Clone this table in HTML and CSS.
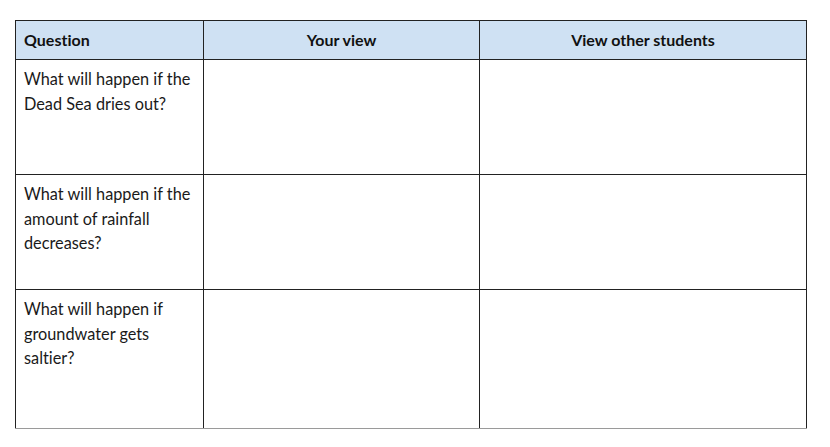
FILE: index.html
```html
<!DOCTYPE html>
<html>
<head>
<meta charset="utf-8">
<link rel="stylesheet" href="styles.css">
</head>
<body>
<table class="grid">
  <colgroup>
    <col class="c-q">
    <col class="c-you">
    <col class="c-other">
  </colgroup>
  <thead>
    <tr class="head">
      <th class="left">Question</th>
      <th>Your view</th>
      <th>View other students</th>
    </tr>
  </thead>
  <tbody>
    <tr class="row">
      <td>What will happen if the Dead Sea dries out?</td>
      <td></td>
      <td></td>
    </tr>
    <tr class="row">
      <td>What will happen if the amount of rainfall decreases?</td>
      <td></td>
      <td></td>
    </tr>
    <tr class="row last">
      <td>What will happen if groundwater gets saltier?</td>
      <td></td>
      <td></td>
    </tr>
  </tbody>
</table>
</body>
</html>
```
FILE: styles.css
```css
html, body {
  margin: 0;
  padding: 0;
  background: #ffffff;
}
body {
  padding: 20px 0 0 15px;
  font-family: "Lato", "Open Sans", sans-serif;
  font-variant-ligatures: none;
  color: #1a1a1a;
}
.grid {
  border-collapse: collapse;
  table-layout: fixed;
  width: 791px;
}
.c-q { width: 188px; }
.c-you { width: 276px; }
.c-other { width: 327px; }
.grid th, .grid td {
  border: 1.5px solid #222;
  vertical-align: top;
  padding: 7px 8px 0 8px;
  font-size: 16.3px;
  line-height: 24.5px;
  text-align: left;
}
.head th {
  background: #cfe1f3;
  height: 38px;
  padding: 0 8px;
  vertical-align: middle;
  text-align: center;
  font-weight: 700;
  font-size: 16px;
  line-height: 20px;
  color: #111;
}
.head th.left { text-align: left; }
.row td { height: 107px; }
.row.last td { height: 131px; border-bottom-color: #9a9a9a; }
```
